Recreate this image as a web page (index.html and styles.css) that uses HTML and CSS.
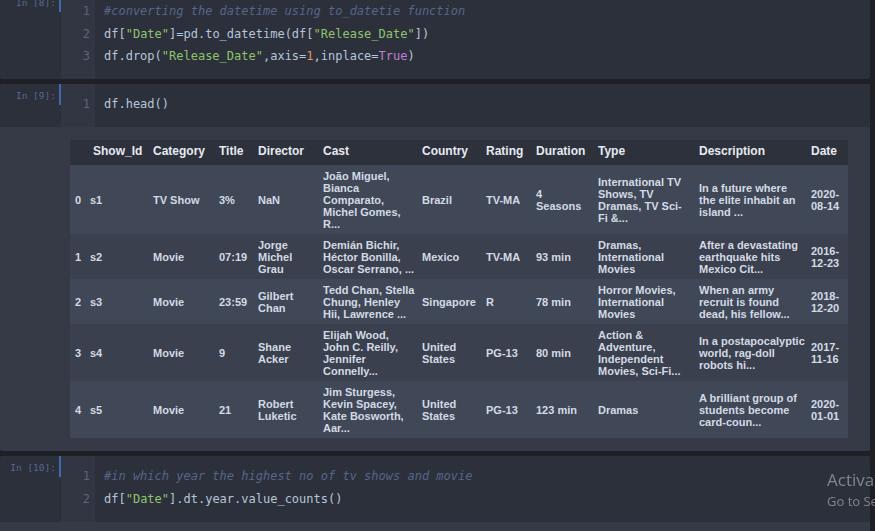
FILE: index.html
```html
<!DOCTYPE html>
<html>
<head>
<meta charset="utf-8">
<link rel="stylesheet" href="styles.css">
</head>
<body>
<div class="notebook">
  <div class="cell">
    <div class="input">
      <div class="prompt">In [8]:</div>
      <div class="marker"></div>
      <div class="editor">
        <div class="gutter"><div>1</div><div>2</div><div>3</div></div>
<pre class="code"><span class="cm">#converting the datetime using to_datetie function</span>
df[<span class="st">"Date"</span>]=pd.to_datetime(df[<span class="st">"Release_Date"</span>])
df.drop(<span class="st">"Release_Date"</span>,axis=<span class="nu">1</span>,inplace=<span class="kw">True</span>)</pre>
      </div>
    </div>
  </div>

  <div class="cell">
    <div class="input">
      <div class="prompt">In [9]:</div>
      <div class="marker"></div>
      <div class="editor">
        <div class="gutter"><div>1</div></div>
<pre class="code">df.head()</pre>
      </div>
    </div>
    <div class="output">
      <table class="df">
        <colgroup>
          <col class="c-idx"><col class="c-id"><col class="c-cat"><col class="c-title"><col class="c-dir"><col class="c-cast"><col class="c-country"><col class="c-rating"><col class="c-dur"><col class="c-type"><col class="c-desc"><col class="c-date">
        </colgroup>
        <thead>
          <tr><th></th><th class="h-id">Show_Id</th><th>Category</th><th>Title</th><th>Director</th><th>Cast</th><th>Country</th><th>Rating</th><th>Duration</th><th>Type</th><th>Description</th><th>Date</th></tr>
        </thead>
        <tbody>
          <tr>
            <th>0</th><td>s1</td><td>TV Show</td><td>3%</td><td>NaN</td>
            <td>João Miguel,<br>Bianca<br>Comparato,<br>Michel Gomes,<br>R...</td>
            <td>Brazil</td><td>TV-MA</td><td>4<br>Seasons</td>
            <td>International TV<br>Shows, TV<br>Dramas, TV Sci-<br>Fi &amp;...</td>
            <td>In a future where<br>the elite inhabit an<br>island ...</td>
            <td>2020-<br>08-14</td>
          </tr>
          <tr>
            <th>1</th><td>s2</td><td>Movie</td><td>07:19</td><td>Jorge<br>Michel<br>Grau</td>
            <td>Demián Bichir,<br>Héctor Bonilla,<br>Oscar Serrano, ...</td>
            <td>Mexico</td><td>TV-MA</td><td>93 min</td>
            <td>Dramas,<br>International<br>Movies</td>
            <td>After a devastating<br>earthquake hits<br>Mexico Cit...</td>
            <td>2016-<br>12-23</td>
          </tr>
          <tr>
            <th>2</th><td>s3</td><td>Movie</td><td>23:59</td><td>Gilbert<br>Chan</td>
            <td>Tedd Chan, Stella<br>Chung, Henley<br>Hii, Lawrence ...</td>
            <td>Singapore</td><td>R</td><td>78 min</td>
            <td>Horror Movies,<br>International<br>Movies</td>
            <td>When an army<br>recruit is found<br>dead, his fellow...</td>
            <td>2018-<br>12-20</td>
          </tr>
          <tr>
            <th>3</th><td>s4</td><td>Movie</td><td>9</td><td>Shane<br>Acker</td>
            <td>Elijah Wood,<br>John C. Reilly,<br>Jennifer<br>Connelly...</td>
            <td>United<br>States</td><td>PG-13</td><td>80 min</td>
            <td>Action &amp;<br>Adventure,<br>Independent<br>Movies, Sci-Fi...</td>
            <td>In a postapocalyptic<br>world, rag-doll<br>robots hi...</td>
            <td>2017-<br>11-16</td>
          </tr>
          <tr>
            <th>4</th><td>s5</td><td>Movie</td><td>21</td><td>Robert<br>Luketic</td>
            <td>Jim Sturgess,<br>Kevin Spacey,<br>Kate Bosworth,<br>Aar...</td>
            <td>United<br>States</td><td>PG-13</td><td>123 min</td>
            <td>Dramas</td>
            <td>A brilliant group of<br>students become<br>card-coun...</td>
            <td>2020-<br>01-01</td>
          </tr>
        </tbody>
      </table>
    </div>
  </div>

  <div class="cell">
    <div class="input">
      <div class="prompt">In [10]:</div>
      <div class="marker"></div>
      <div class="editor">
        <div class="gutter"><div>1</div><div>2</div></div>
<pre class="code"><span class="cm">#in which year the highest no of tv shows and movie</span>
df[<span class="st">"Date"</span>].dt.year.value_counts()</pre>
      </div>
    </div>
    <div class="output output-tail"></div>
  </div>
</div>

<div class="watermark">
  <div class="wm-title">Activate Windows</div>
  <div class="wm-sub">Go to Settings to activate Windows.</div>
</div>
</body>
</html>
```

FILE: styles.css
```css
html, body {
  margin: 0;
  padding: 0;
  background: #1f2025;
  overflow: hidden;
  height: 100%;
}

.notebook {
  width: 870px;
  margin-top: -9px;
  display: flex;
  flex-direction: column;
  gap: 5px;
}

.cell {
  border-radius: 2px;
  overflow: hidden;
}

.input {
  display: flex;
  background: #2c303b;
}

.prompt {
  width: 56px;
  padding: 6px 3px 0 0;
  text-align: right;
  font-family: "DejaVu Sans Mono", monospace;
  font-size: 9.5px;
  line-height: 12px;
  color: #56698f;
}

.marker {
  width: 2px;
  height: 21px;
  background: #3d6bb0;
  flex: none;
}

.editor {
  flex: 1;
  display: flex;
}

.gutter {
  width: 29px;
  padding: 9px 5px 11.5px 0;
  background: #323643;
  text-align: right;
  font-family: "DejaVu Sans Mono", monospace;
  font-size: 12px;
  line-height: 22.5px;
  color: #5a6480;
}

.code {
  margin: 0;
  padding: 9px 0 11.5px 9px;
  font-family: "DejaVu Sans Mono", monospace;
  font-size: 12px;
  line-height: 22.5px;
  color: #b5c6da;
  white-space: pre;
}

.cm { color: #55668a; font-style: italic; }
.st { color: #8fc46c; }
.nu { color: #e3956a; }
.kw { color: #c07fd8; }

.output {
  background: #363a47;
  padding: 13px 0 13px 70px;
}

.output-tail {
  height: 20px;
  padding: 0;
}

.df {
  border-collapse: collapse;
  table-layout: fixed;
  width: 778px;
  font-family: "Liberation Sans", Arial, sans-serif;
  font-weight: bold;
}

.c-idx { width: 15px; }
.c-id { width: 63px; }
.c-cat { width: 66px; }
.c-title { width: 39px; }
.c-dir { width: 65px; }
.c-cast { width: 99px; }
.c-country { width: 64px; }
.c-rating { width: 50px; }
.c-dur { width: 62px; }
.c-type { width: 101px; }
.c-desc { width: 112px; }
.c-date { width: 42px; }

.df thead th {
  background: #2d313c;
  color: #e6eaf1;
  font-size: 12px;
  line-height: 15px;
  padding: 4px 5px 6px;
  text-align: left;
  white-space: nowrap;
}

.df thead th.h-id {
  padding-left: 8px;
}

.df tbody th,
.df tbody td {
  font-size: 11px;
  line-height: 12px;
  padding: 5px 5px 4px;
  text-align: left;
  vertical-align: middle;
  color: #d3dae4;
  white-space: nowrap;
}

.df tbody tr:nth-child(odd) { background: #404858; }
.df tbody tr:nth-child(even) { background: #3a404e; }

.watermark {
  position: fixed;
  left: 827px;
  top: 468px;
  white-space: nowrap;
  font-family: "Open Sans", "Noto Sans", sans-serif;
  color: rgba(200, 203, 210, 0.55);
}

.wm-title {
  font-size: 17px;
  line-height: 24px;
}

.wm-sub {
  font-size: 13px;
  line-height: 18px;
}
```
